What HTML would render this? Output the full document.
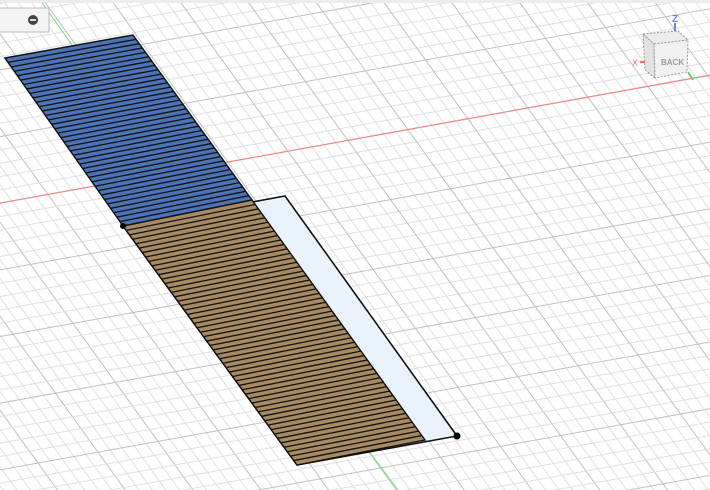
<!DOCTYPE html>
<html><head><style>
html,body{margin:0;padding:0;width:710px;height:490px;overflow:hidden;background:#fff;font-family:"Liberation Sans",sans-serif}
svg{overflow:hidden;display:block}
</style></head><body>
<svg id="s" width="710" height="490" viewBox="0 0 710 490" xmlns="http://www.w3.org/2000/svg" style="position:absolute;left:0;top:0">
<g id="grid"></g>
<line x1="0" y1="203" x2="710" y2="75" stroke="#f08080" stroke-width="1"/>
<line x1="40" y1="0" x2="72" y2="45" stroke="#70e070" stroke-width="1"/>
<line x1="368" y1="450" x2="398" y2="490" stroke="#70e070" stroke-width="1"/>
<polygon points="123,226 285,196 457,436 297,465" fill="#eaf3fb" stroke="#111" stroke-width="1.6"/>
<polygon points="5,58 133,35 252,200 123,226" fill="#4b73b6"/>
<polygon points="123,226 252,200 425,440 297,465" fill="#a88a62"/>
<g id="stripes"></g>
<polygon points="5,58 133,35 252,200 123,226" fill="none" stroke="#111" stroke-width="1.4"/>
<polygon points="123,226 252,200 425,440 297,465" fill="none" stroke="#111" stroke-width="1.4"/>
<circle cx="123" cy="226" r="3" fill="#000"/>
<circle cx="457" cy="436" r="3.5" fill="#000"/>
<rect x="0" y="0" width="710" height="3" fill="#ececec"/>
<rect x="-1" y="8" width="50" height="24" fill="#f4f4f4" stroke="#bcbcbc"/>
<circle cx="33" cy="20" r="5" fill="#444"/>
<rect x="30" y="19.2" width="6" height="1.6" fill="#fff"/>
<polygon points="643,34 678,31 688,40 654,44" fill="#ededed" stroke="#999" stroke-dasharray="2,1.5"/>
<polygon points="643,34 654,44 655,78 645,70" fill="#e2e2e2" stroke="#999" stroke-dasharray="2,1.5"/>
<polygon points="654,44 688,40 687,72 655,78" fill="#f1f1f1" stroke="#999" stroke-dasharray="2,1.5"/>
<text x="661" y="65" font-size="8" fill="#999" font-weight="bold">BACK</text>
<text x="672" y="22" font-size="10" fill="#6b7ff0" font-weight="bold">Z</text>
<line x1="675" y1="23" x2="675" y2="31" stroke="#6b7ff0" stroke-width="2"/>
<text x="632" y="66" font-size="9" fill="#f07070">X</text>
<line x1="640" y1="62" x2="645" y2="62" stroke="#f07070" stroke-width="2"/>
<line x1="688" y1="72" x2="693" y2="80" stroke="#60d060" stroke-width="2"/>
</svg>
<script>
var NS="http://www.w3.org/2000/svg";
var g=document.getElementById('grid');
var O=[168,173],a=[12,-2.16],b=[8.5,11.8];
function P(u,v){return [O[0]+u*a[0]+v*b[0],O[1]+u*a[1]+v*b[1]];}
function L(p,q,c,w,par){var l=document.createElementNS(NS,'line');l.setAttribute('x1',p[0]);l.setAttribute('y1',p[1]);l.setAttribute('x2',q[0]);l.setAttribute('y2',q[1]);l.setAttribute('stroke',c);l.setAttribute('stroke-width',w);par.appendChild(l);}
var N=80;
for(var i=-N;i<=N;i++){var maj=(i%5==0);var c=maj?'#c0c0c0':'#e0e0e0';
L(P(i,-N),P(i,N),c,1,g);L(P(-N,i),P(N,i),c,1,g);}
var st=document.getElementById('stripes');
function stripes(A,B,C,D,n){for(var k=1;k<n;k++){var t=k/n;
var p=[A[0]+(D[0]-A[0])*t,A[1]+(D[1]-A[1])*t],q=[B[0]+(C[0]-B[0])*t,B[1]+(C[1]-B[1])*t];L(p,q,'#111',1.3,st);}}
stripes([5,58],[133,35],[252,200],[123,226],38);
stripes([123,226],[252,200],[425,440],[297,465],54);
</script>
</body></html>
